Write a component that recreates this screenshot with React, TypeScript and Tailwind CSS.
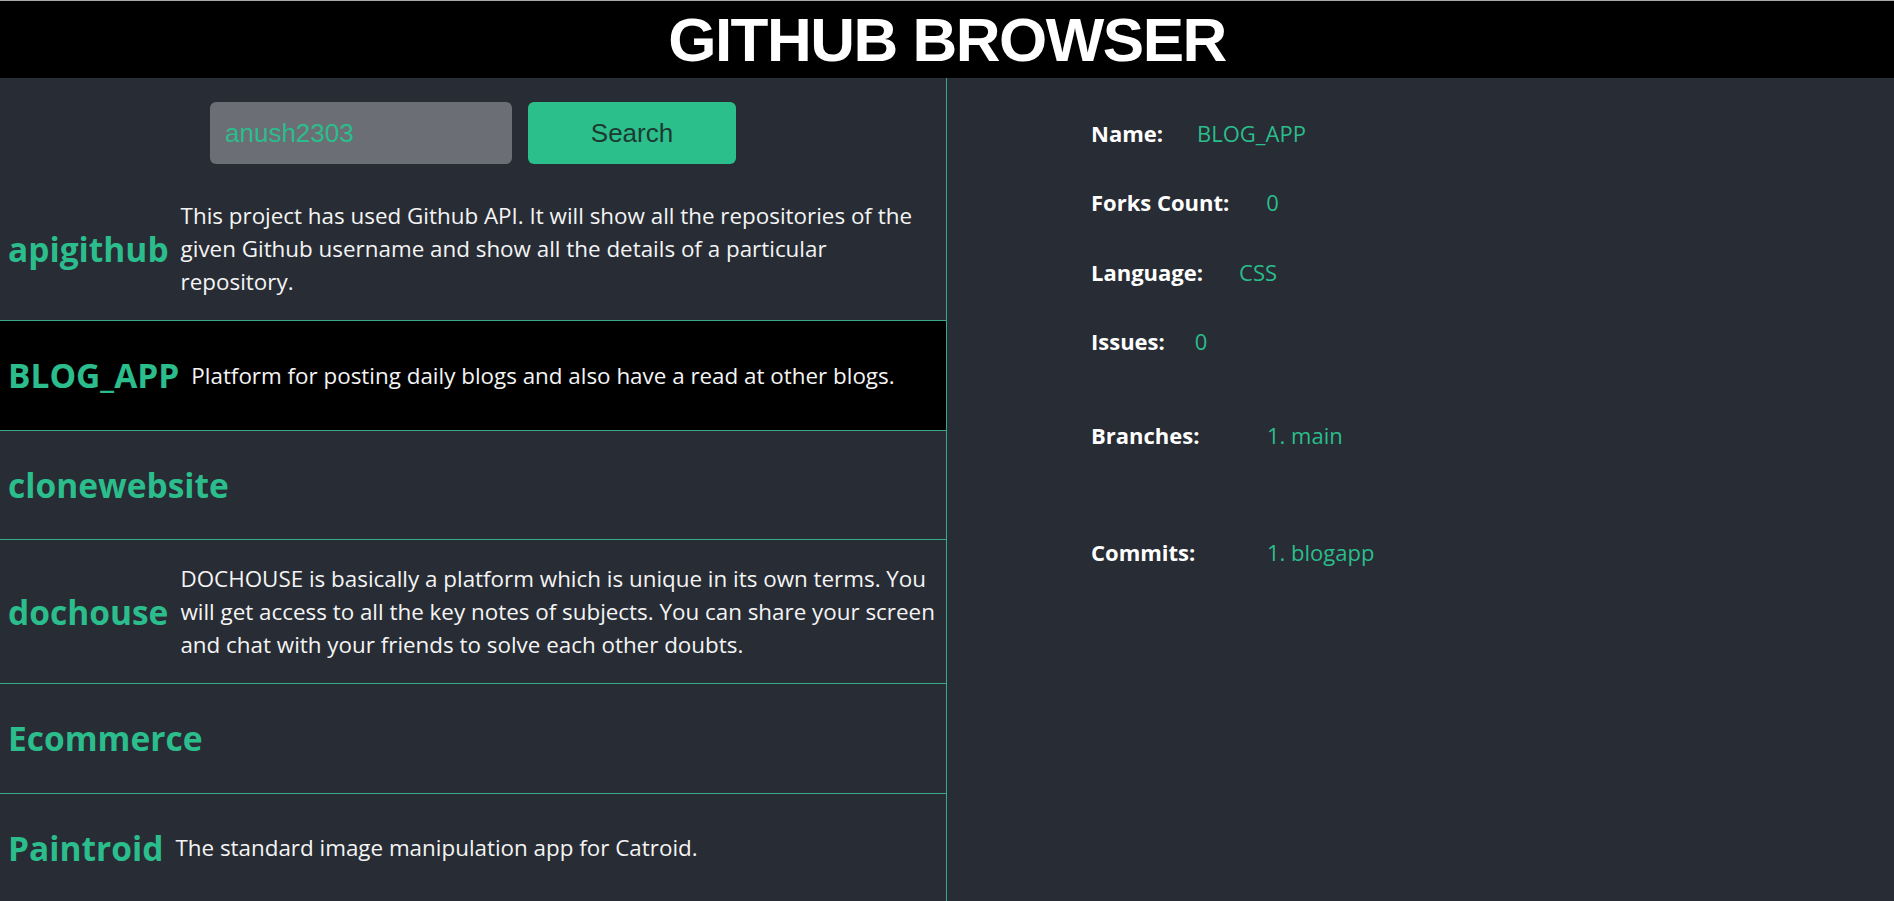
import { useState } from "react";

type Repo = {
  name: string;
  description?: string;
};

const repos: Repo[] = [
  {
    name: "apigithub",
    description:
      "This project has used Github API. It will show all the repositories of the given Github username and show all the details of a particular repository.",
  },
  {
    name: "BLOG_APP",
    description:
      "Platform for posting daily blogs and also have a read at other blogs.",
  },
  { name: "clonewebsite" },
  {
    name: "dochouse",
    description:
      "DOCHOUSE is basically a platform which is unique in its own terms. You will get access to all the key notes of subjects. You can share your screen and chat with your friends to solve each other doubts.",
  },
  { name: "Ecommerce" },
  {
    name: "Paintroid",
    description: "The standard image manipulation app for Catroid.",
  },
];

export default function App() {
  const [usuario, setUsuario] = useState("anush2303");
  const [activo, setActivo] = useState("BLOG_APP");

  return (
    <div className="min-h-screen bg-[#282c34] font-['Open_Sans',sans-serif]">
      <header className="flex h-[78px] items-center justify-center border-t border-[#a8a8a8] bg-black">
        <h1 className="font-['Liberation_Sans',Arial,sans-serif] text-[62px] leading-none font-bold tracking-[-1.5px] text-white">
          GITHUB BROWSER
        </h1>
      </header>

      <div className="grid h-[823px] grid-cols-2 overflow-hidden">
        <section className="border-r border-[#3aa98a]">
          <div className="flex justify-center gap-4 pt-[24px] pb-[13px]">
            <input
              value={usuario}
              onChange={(e) => setUsuario(e.target.value)}
              className="h-[62px] w-[302px] rounded-md bg-[#6b6e75] px-[15px] font-['Liberation_Sans',Arial,sans-serif] text-[26px] text-[#2bbd8c] outline-none"
            />
            <button className="h-[62px] w-[208px] rounded-md bg-[#2bbf8c] font-['Liberation_Sans',Arial,sans-serif] text-[26px] text-[#1d3a31]">
              Search
            </button>
          </div>

          <div>
            {repos.map((repo) => (
              <div
                key={repo.name}
                onClick={() => setActivo(repo.name)}
                className={`flex cursor-pointer items-center gap-3 border-b border-[#3aa98a] pl-2 ${
                  activo === repo.name ? "bg-black" : ""
                }`}
              >
                <h2 className="shrink-0 py-[31.25px] text-[33.5px] leading-[46px] font-bold text-[#2bbd8c]">
                  {repo.name}
                </h2>
                {repo.description && (
                  <p className="py-[22px] pr-2 text-[22.4px] leading-[33px] text-[#f4f4f4]">
                    {repo.description}
                  </p>
                )}
              </div>
            ))}
          </div>
        </section>

        <section className="pt-[39px] pl-[144px] text-[22px] leading-[32px]">
          <div className="flex">
            <span className="font-bold text-white">Name:</span>
            <span className="ml-[34px] text-[#2bbd8c]">{activo}</span>
          </div>
          <div className="mt-[37px] flex">
            <span className="font-bold text-white">Forks Count:</span>
            <span className="ml-[37px] text-[#2bbd8c]">0</span>
          </div>
          <div className="mt-[38px] flex">
            <span className="font-bold text-white">Language:</span>
            <span className="ml-[36px] text-[#2bbd8c]">CSS</span>
          </div>
          <div className="mt-[37px] flex">
            <span className="font-bold text-white">Issues:</span>
            <span className="ml-[30px] text-[#2bbd8c]">0</span>
          </div>
          <div className="mt-[62px] flex">
            <span className="w-[176px] shrink-0 font-bold text-white">
              Branches:
            </span>
            <ol className="text-[#2bbd8c]">
              <li>1. main</li>
            </ol>
          </div>
          <div className="mt-[85px] flex">
            <span className="w-[176px] shrink-0 font-bold text-white">
              Commits:
            </span>
            <ol className="text-[#2bbd8c]">
              <li>1. blogapp</li>
            </ol>
          </div>
        </section>
      </div>
    </div>
  );
}
